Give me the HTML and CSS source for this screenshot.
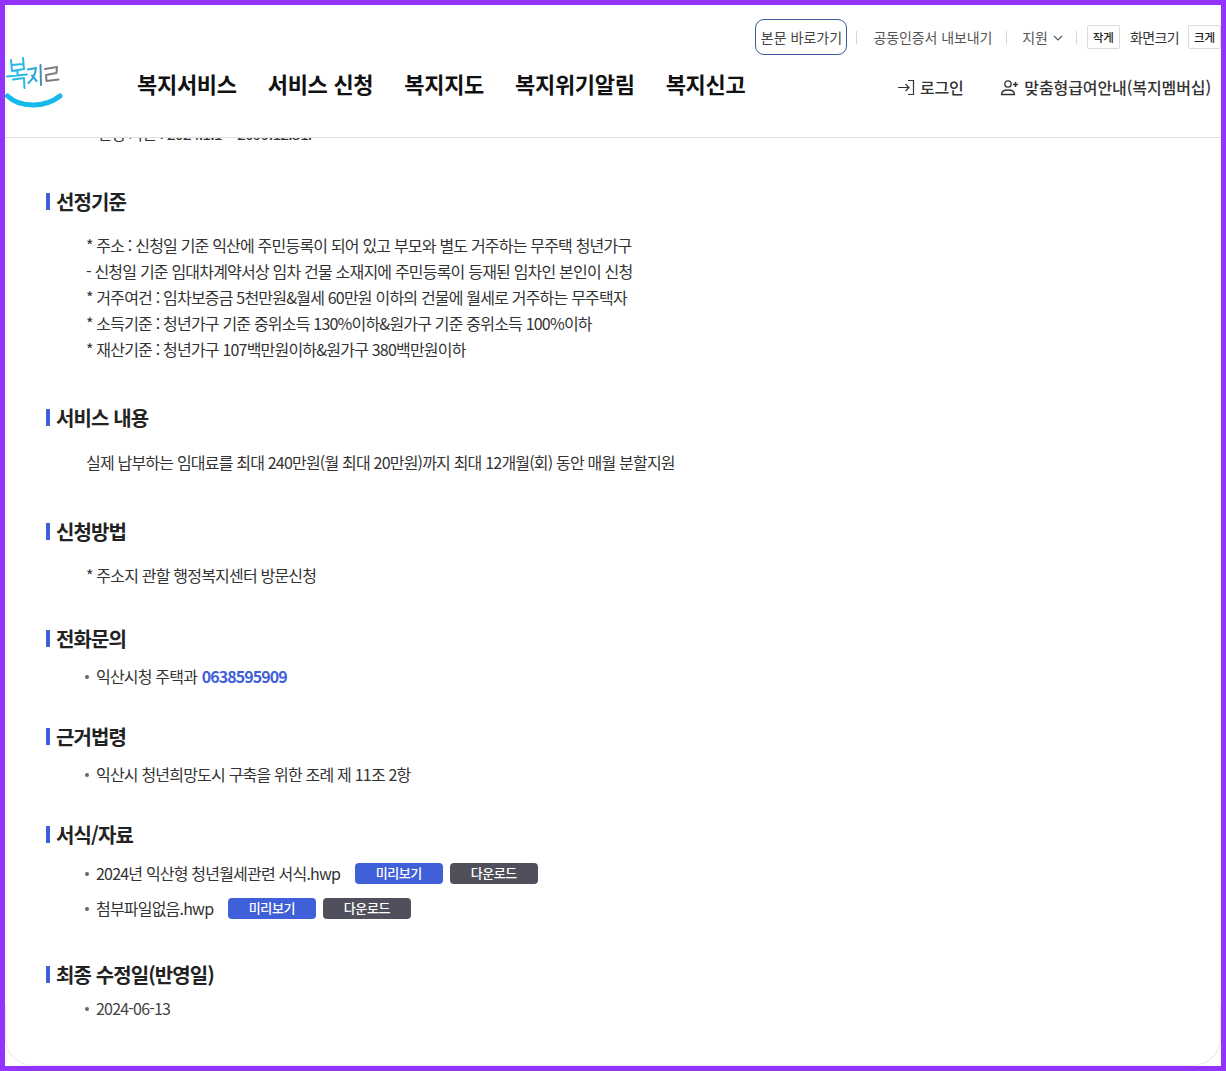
FILE: index.html
```html
<!DOCTYPE html>
<html lang="ko">
<head>
<meta charset="utf-8">
<title>복지로</title>
<link rel="stylesheet" href="styles.css">
</head>
<body>
<div class="frame">
  <div class="page">
    <header class="header">
      <div class="util">
        <a class="skip">본문 바로가기</a>
        <span class="sep"></span>
        <a class="util-link">공동인증서 내보내기</a>
        <span class="sep"></span>
        <a class="util-link support">지원
          <svg class="chev" viewBox="0 0 10 6" width="10" height="6"><path d="M1 1l4 4 4-4" fill="none" stroke="#555" stroke-width="1.1"/></svg>
        </a>
        <span class="sep"></span>
        <span class="size-btn">작게</span>
        <span class="size-label">화면크기</span>
        <span class="size-btn">크게</span>
      </div>
      <div class="mainbar">
        <a class="logo" aria-label="복지로">
          <svg viewBox="0 0 60 56" width="60" height="56">
            <g transform="translate(-5 -55)" fill="none" stroke-linecap="round" stroke-linejoin="round">
              <path d="M11 60L12 71L24 69M23 58L24 69M11.500 65L23.500 64M17.500 70L17.500 75M7 76.500L27 74.500M13 79.500L24 78L24.500 88" stroke="#29b9e6" stroke-width="2"/>
              <path d="M28 69.500L36 68C35.500 74 33 79 28.500 83M32 75.500L36.500 81" stroke="#2aa7d8" stroke-width="2"/>
              <path d="M40.500 65L41 85" stroke="#3f8fb8" stroke-width="2"/>
              <path d="M45 69L57 67L56.500 73L46 75L46.500 81L58.500 79.500" stroke="#7d7d85" stroke-width="2"/>
              <path d="M7.500 96C20 108 45 108 60 96" stroke="#17b9ea" stroke-width="5"/>
            </g>
          </svg>
        </a>
        <nav class="gnb">
          <a>복지서비스</a>
          <a>서비스 신청</a>
          <a>복지지도</a>
          <a>복지위기알림</a>
          <a>복지신고</a>
        </nav>
        <div class="account">
          <a class="acc-link login">
            <svg viewBox="0 0 18 17" width="18" height="17"><path d="M1 8.500h11M8.500 5l3.500 3.500-3.500 3.500M11 1.500h5.500v14H11" fill="none" stroke="#333" stroke-width="1.2"/></svg>
            로그인
          </a>
          <a class="acc-link">
            <svg viewBox="0 0 19 17" width="19" height="17"><circle cx="8" cy="5" r="3.200" fill="none" stroke="#333" stroke-width="1.300"/><path d="M1.500 15.500c0-3 2.500-4.500 6.500-4.500s6.500 1.500 6.500 4.500z" fill="none" stroke="#333" stroke-width="1.300"/><path d="M13 5.500h5M15.500 3v5" stroke="#333" stroke-width="1.500"/></svg>
            맞춤형급여안내(복지멤버십)
          </a>
        </div>
      </div>
    </header>
    <main class="content">
      <p class="clipped">* 신청 기한 : 2024.1.1 ~ 2099.12.31.</p>
      <section class="sec sec-a">
        <h2 class="title">선정기준</h2>
        <div class="body lines">
          <p>* 주소 : 신청일 기준 익산에 주민등록이 되어 있고 부모와 별도 거주하는 무주택 청년가구</p>
          <p>- 신청일 기준 임대차계약서상 임차 건물 소재지에 주민등록이 등재된 임차인 본인이 신청</p>
          <p>* 거주여건 : 임차보증금 5천만원&amp;월세 60만원 이하의 건물에 월세로 거주하는 무주택자</p>
          <p>* 소득기준 : 청년가구 기준 중위소득 130%이하&amp;원가구 기준 중위소득 100%이하</p>
          <p>* 재산기준 : 청년가구 107백만원이하&amp;원가구 380백만원이하</p>
        </div>
      </section>
      <section class="sec sec-b">
        <h2 class="title">서비스 내용</h2>
        <div class="body lines"><p>실제 납부하는 임대료를 최대 240만원(월 최대 20만원)까지 최대 12개월(회) 동안 매월 분할지원</p></div>
      </section>
      <section class="sec sec-c">
        <h2 class="title">신청방법</h2>
        <div class="body lines"><p>* 주소지 관할 행정복지센터 방문신청</p></div>
      </section>
      <section class="sec sec-d">
        <h2 class="title">전화문의</h2>
        <ul class="list"><li>익산시청 주택과 <a class="tel">0638595909</a></li></ul>
      </section>
      <section class="sec sec-e">
        <h2 class="title">근거법령</h2>
        <ul class="list"><li>익산시 청년희망도시 구축을 위한 조례 제 11조 2항</li></ul>
      </section>
      <section class="sec sec-f">
        <h2 class="title">서식/자료</h2>
        <ul class="list files">
          <li>2024년 익산형 청년월세관련 서식.hwp <a class="btn blue">미리보기</a><a class="btn dark">다운로드</a></li>
          <li>첨부파일없음.hwp <a class="btn blue">미리보기</a><a class="btn dark">다운로드</a></li>
        </ul>
      </section>
      <section class="sec sec-g">
        <h2 class="title">최종 수정일(반영일)</h2>
        <ul class="list date"><li>2024-06-13</li></ul>
      </section>
    </main>
  </div>
</div>
</body>
</html>
```
FILE: styles.css
```css
* { box-sizing: border-box; }
html, body { margin: 0; padding: 0; }
body {
  width: 1226px;
  height: 1071px;
  overflow: hidden;
  font-family: "Noto Sans CJK KR", "Noto Sans", sans-serif;
  color: #222;
}
.frame {
  height: 1071px;
  padding: 5px;
  background: #9333ff;
}
.page {
  position: relative;
  height: 1061px;
  background: #fff;
  overflow: hidden;
}
.page::after {
  content: "";
  position: absolute;
  left: 0;
  right: 0;
  bottom: 0;
  height: 60px;
  border: 1px solid #eaeaee;
  border-top: 0;
  border-radius: 0 0 28px 28px;
  pointer-events: none;
}
.header {
  position: relative;
  z-index: 1;
  height: 133px;
  background: #fff;
  border-bottom: 1px solid #dfdfe3;
}
.clipped {
  margin: -18px 0 0 41px;
  font-size: 16px;
  letter-spacing: -0.9px;
  line-height: 26px;
  color: #333;
}
.util {
  display: flex;
  align-items: center;
  justify-content: flex-end;
  height: 36px;
  margin-top: 14px;
  position: absolute;
  right: 0;
  top: 0;
  font-size: 14px;
  color: #555;
}
.skip {
  display: flex;
  align-items: center;
  justify-content: center;
  width: 92px;
  height: 36px;
  border: 1px solid #3b5a9e;
  border-radius: 9px;
  color: #444;
}
.sep {
  width: 1px;
  height: 13px;
  background: #d5d5d8;
  margin: 0 16px 0 9px;
}
.util-link { letter-spacing: -0.1px; }
.util-link + .sep { margin: 0 15px 0 14px; }
.support { display: flex; align-items: center; gap: 5px; }
.support + .sep { margin: 0 10px 0 13px; }
.chev { margin-top: 2px; }
.size-btn {
  display: flex;
  align-items: center;
  justify-content: center;
  width: 33px;
  height: 24px;
  border: 1px solid #dcdcdf;
  border-radius: 2px;
  font-size: 11.500px;
  font-weight: 500;
  color: #222;
}
.size-label {
  margin: 0 9px 0 10px;
  color: #333;
  letter-spacing: -0.6px;
}
.mainbar {
  display: flex;
  align-items: center;
  position: absolute;
  left: 0;
  top: 50px;
  width: 100%;
  height: 56px;
}
.logo { width: 60px; height: 56px; display: block; }
.gnb {
  display: flex;
  gap: 31px;
  margin-left: 72px;
  font-size: 22px;
  font-weight: 700;
  color: #111;
  letter-spacing: -0.3px;
  position: relative;
  top: 0;
}
.account {
  display: flex;
  align-items: center;
  margin-left: auto;
  padding-right: 10px;
  font-size: 16px;
  font-weight: 500;
  color: #333;
  letter-spacing: -0.1px;
  position: relative;
  top: 4px;
}
.acc-link { display: flex; align-items: center; gap: 5px; }
.login { margin-right: 37px; letter-spacing: -0.3px; }
.content { padding-left: 41px; }
.sec { margin: 0; }
.title {
  position: relative;
  margin: 0;
  padding-left: 10px;
  font-size: 20px;
  font-weight: 700;
  line-height: 28px;
  letter-spacing: -0.9px;
  color: #222;
}
.title::before {
  content: "";
  position: absolute;
  left: 0;
  top: 5px;
  width: 4px;
  height: 17px;
  background: #3f60d8;
}
.body { padding-left: 40px; }
.lines p {
  margin: 0;
  font-size: 16px;
  line-height: 26px;
  letter-spacing: -0.8px;
  color: #333;
}
.lines { margin-top: 16px; }
.sec-b .lines { margin-top: 17px; }
.sec-a { padding-top: 42px; }
.sec-b { padding-top: 42px; }
.sec-c { padding-top: 43px; }
.sec-d { padding-top: 37px; }
.sec-e { padding-top: 34px; }
.sec-f { padding-top: 34px; }
.sec-g { padding-top: 31px; }
.list {
  list-style: none;
  margin: 10px 0 0;
  padding: 0 0 0 50px;
  font-size: 16px;
  line-height: 26px;
  letter-spacing: -0.8px;
  color: #333;
}
.list li { position: relative; }
.list li::before {
  content: "";
  position: absolute;
  left: -11px;
  top: 12px;
  width: 4px;
  height: 4px;
  border-radius: 50%;
  background: #666;
}
.tel { color: #3f60d8; font-weight: 700; letter-spacing: -0.95px; margin-left: 1px; }
.files li { height: 35px; display: block; }
.files { margin-top: 11px; }
.date { color: #444; margin-top: 6px; }
.btn {
  display: inline-block;
  width: 88px;
  height: 21px;
  margin-left: 7px;
  border-radius: 4px;
  color: #fff;
  font-size: 13px;
  font-weight: 500;
  line-height: 19px;
  text-align: center;
  vertical-align: 2px;
  letter-spacing: -0.4px;
}
.btn.blue { background: #3f60d8; margin-left: 11px; }
.btn.dark { background: #50505c; }
```
